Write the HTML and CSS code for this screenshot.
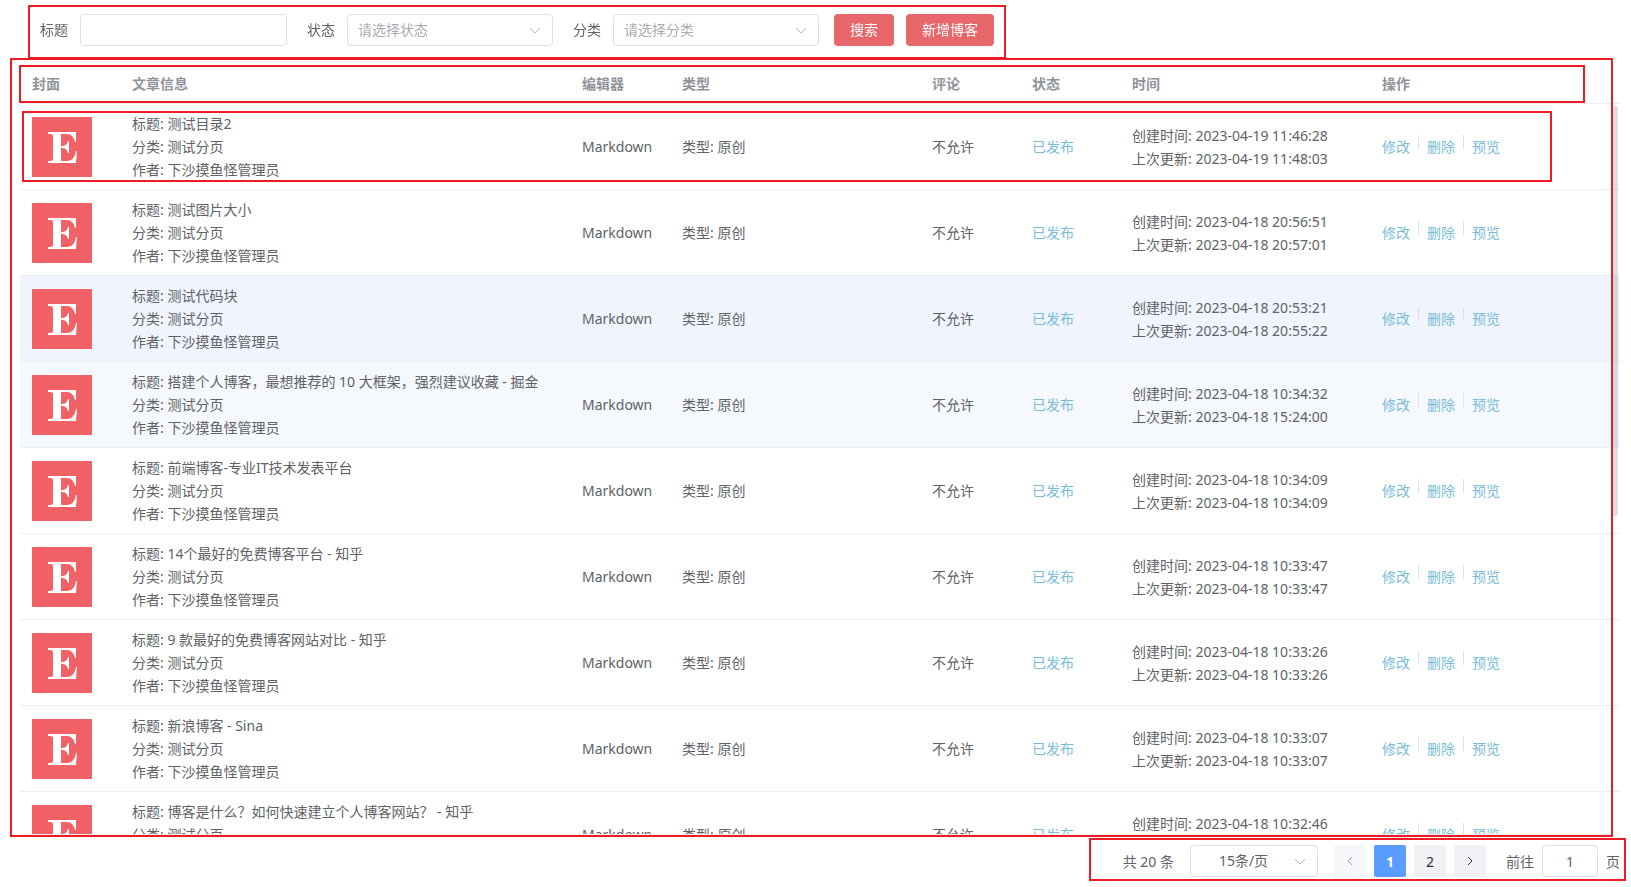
FILE: index.html
```
<!DOCTYPE html>
<html lang="zh-CN">
<head>
<meta charset="utf-8">
<title>博客管理</title>
<link rel="stylesheet" href="styles.css">
</head>
<body>
<svg class="defs" aria-hidden="true">
  <symbol id="down" viewBox="0 0 14 14"><path d="M2 5l5 5 5-5" fill="none" stroke="currentColor"/></symbol>
  <symbol id="left" viewBox="0 0 14 14"><path d="M9 3L5 7l4 4" fill="none" stroke="currentColor"/></symbol>
  <symbol id="right" viewBox="0 0 14 14"><path d="M5 3l4 4-4 4" fill="none" stroke="currentColor"/></symbol>
  <symbol id="cover" viewBox="0 0 60 60"><rect width="60" height="60" fill="#f16165"/><path d="M16 15h28v10h-1c-1-5-4-8-8-8h-6v12c4 0 6-1 7-5h1v12h-1c-1-4-3-5-7-5v13h6c5 0 8-4 9-10h1l-1 12H16v-2c3 0 5 0 5-2V19c0-2-2-2-5-2z" fill="#fff"/></symbol>
</svg>
<form class="search marked">
  <div class="field"><label for="title">标题</label><input class="box" id="title" type="text"></div>
  <div class="field"><label for="status">状态</label><span class="pick"><select class="box" id="status"><option>请选择状态</option></select><svg><use href="#down"/></svg></span></div>
  <div class="field"><label for="category">分类</label><span class="pick"><select class="box" id="category"><option>请选择分类</option></select><svg><use href="#down"/></svg></span></div>
  <div class="buttons"><button type="button">搜索</button><button type="button">新增博客</button></div>
</form>
<main class="list marked">
  <div class="scroll">
    <table>
      <colgroup><col class="w100"><col class="w450"><col class="w100"><col class="w250"><col class="w100"><col class="w100"><col class="w250"><col class="w250"></colgroup>
      <thead><tr><th>封面</th><th>文章信息</th><th>编辑器</th><th>类型</th><th>评论</th><th>状态</th><th>时间</th><th>操作</th></tr></thead>
      <tbody id="rows"></tbody>
    </table>
  </div>
  <div class="thumb"></div>
  <div class="frame frame-head"></div>
  <div class="frame frame-row"></div>
</main>
<nav class="pages marked" aria-label="分页">
  <span class="total">共 20 条</span>
  <span class="pick size"><select class="box" aria-label="每页条数"><option>15条/页</option></select><svg><use href="#down"/></svg></span>
  <div class="pager">
    <button type="button" disabled aria-label="上一页"><svg><use href="#left"/></svg></button>
    <button type="button" class="current">1</button>
    <button type="button">2</button>
    <button type="button" aria-label="下一页"><svg><use href="#right"/></svg></button>
  </div>
  <div class="jump"><label for="page">前往</label><input class="box" id="page" type="text" value="1"><span>页</span></div>
</nav>
<script src="rows.js"></script>
</body>
</html>
```
FILE: styles.css
```
* { box-sizing: border-box; }
body {
  margin: 0;
  height: 100vh;
  padding: 5px 0 6px;
  display: flex;
  flex-direction: column;
  overflow: hidden;
  background: #fff;
  color: #606266;
  font: 14px/23px "Noto Sans", "Noto Sans CJK SC", sans-serif;
}
.defs { position: absolute; width: 0; height: 0; }
input, select, button { font: inherit; color: inherit; margin: 0; }
.marked { position: relative; }
.marked::after, .frame {
  content: "";
  position: absolute;
  inset: 0;
  border: 2px solid #ed1c24;
  pointer-events: none;
}
.search {
  z-index: 1;
  align-self: flex-start;
  display: flex;
  gap: 20px;
  margin-left: 28px;
  padding: 9px 12px 13px;
}
.field { display: flex; align-items: center; gap: 12px; }
.field label { line-height: 21px; margin-bottom: 2px; }
.box {
  width: 207px;
  height: 32px;
  padding: 0 11px;
  border: 1px solid #dcdfe6;
  border-radius: 4px;
  background: #fff;
  outline: none;
}
select.box { appearance: none; padding: 0 10px 2px; color: #a8abb2; }
.field .pick .box { width: 206px; }
.pick { position: relative; display: flex; }
.pick svg {
  position: absolute;
  right: 11px;
  top: 9px;
  width: 14px;
  height: 14px;
  color: #b4b7be;
  pointer-events: none;
}
.buttons { display: flex; gap: 12px; margin-left: -5px; }
.buttons button {
  height: 32px;
  padding: 0 16px 2px;
  border: 0;
  border-radius: 4px;
  background: #e8676b;
  color: #fff;
}
.list {
  flex: 1;
  min-height: 0;
  margin: -3px 11px 0 20px;
}
.list::after { inset: 2px 7px -2px -10px; }
.scroll {
  height: 100%;
  overflow-y: auto;
  scrollbar-width: none;
  border-bottom: 1px solid #ebeef5;
}
table {
  width: 100%;
  table-layout: fixed;
  border-collapse: separate;
  border-spacing: 0;
}
.w100 { width: 6.25%; }
.w250 { width: 15.625%; }
.w450 { width: 28.125%; }
th, td {
  padding: 8px 12px;
  border-bottom: 1px solid #ebeef5;
  text-align: left;
  vertical-align: middle;
}
th {
  position: sticky;
  top: 0;
  padding: 16px 12px 8px;
  background: #fff;
  color: #909399;
  font-weight: 700;
}
td svg { display: block; width: 60px; height: 60px; }
.hover td { background: #f0f5fd; }
.near td { background: #f5f8fd; }
.state, .actions a { color: #79bbd8; text-decoration: none; }
.actions { display: flex; gap: 8px; }
.actions i { width: 1px; height: 14px; background: #dcdfe6; }
.thumb {
  position: absolute;
  top: 50px;
  right: 2px;
  width: 6px;
  height: 410px;
  border-radius: 3px;
  background: rgba(144, 147, 153, 0.3);
}
.frame-head { inset: 9px 35px auto -1px; height: 38px; }
.frame-row { inset: 55px 68px auto 2px; height: 71px; }
.pages {
  align-self: flex-end;
  display: flex;
  align-items: center;
  gap: 16px;
  margin: 3px 5px 0 0;
  padding: 7px 6px 4px 34px;
}
.size .box { width: 128px; padding-right: 31px; text-align-last: center; color: #606266; }
.pager, .jump { display: flex; align-items: center; gap: 8px; }
.jump { margin-left: 4px; }
.jump .box { width: 56px; text-align: center; }
.pager button {
  display: grid;
  place-items: center;
  width: 32px;
  height: 32px;
  padding: 0;
  border: 0;
  border-radius: 2px;
  background: #f0f2f5;
  color: #303133;
}
.pager svg { width: 14px; height: 14px; }
.pager button:disabled { background: #f5f7fa; color: #a8abb2; }
.pager .current { background: #5a9cff; color: #fff; font-weight: 700; }
```
FILE: rows.js
```
const posts = [
  ["测试目录2", "2023-04-19 11:46:28", "2023-04-19 11:48:03"],
  ["测试图片大小", "2023-04-18 20:56:51", "2023-04-18 20:57:01"],
  ["测试代码块", "2023-04-18 20:53:21", "2023-04-18 20:55:22", "hover"],
  ["搭建个人博客，最想推荐的 10 大框架，强烈建议收藏 - 掘金", "2023-04-18 10:34:32", "2023-04-18 15:24:00", "near"],
  ["前端博客-专业IT技术发表平台", "2023-04-18 10:34:09", "2023-04-18 10:34:09"],
  ["14个最好的免费博客平台 - 知乎", "2023-04-18 10:33:47", "2023-04-18 10:33:47"],
  ["9 款最好的免费博客网站对比 - 知乎", "2023-04-18 10:33:26", "2023-04-18 10:33:26"],
  ["新浪博客 - Sina", "2023-04-18 10:33:07", "2023-04-18 10:33:07"],
  ["博客是什么？如何快速建立个人博客网站？ - 知乎", "2023-04-18 10:32:46", "2023-04-18 10:32:46"]
];
document.getElementById("rows").innerHTML = posts.map(([title, created, updated, tone = ""]) => `
  <tr class="${tone}">
    <td><svg role="img" aria-label="封面"><use href="#cover"/></svg></td>
    <td><div>标题: ${title}</div><div>分类: 测试分页</div><div>作者: 下沙摸鱼怪管理员</div></td>
    <td>Markdown</td>
    <td>类型: 原创</td>
    <td>不允许</td>
    <td><span class="state">已发布</span></td>
    <td><div>创建时间: ${created}</div><div>上次更新: ${updated}</div></td>
    <td><div class="actions"><a href="#">修改</a><i></i><a href="#">删除</a><i></i><a href="#">预览</a></div></td>
  </tr>`).join("");
```
